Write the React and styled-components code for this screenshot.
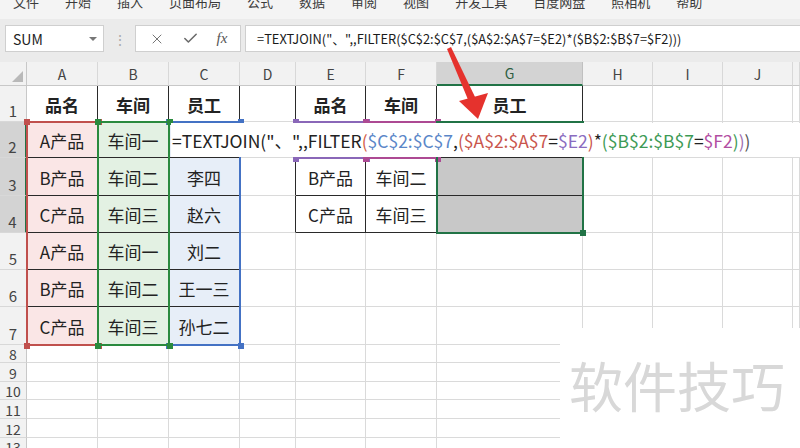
import React from "react";
import styled, { createGlobalStyle } from "styled-components";
import { X, Check } from "lucide-react";

const FONT = `"Noto Sans CJK SC", "Noto Sans", sans-serif`;

const Global = createGlobalStyle`
  html, body { margin: 0; padding: 0; background: #fff; }
  body { font-family: ${FONT}; }
  * { box-sizing: border-box; }
`;

const COLS = [27, 71, 71, 71, 56, 70, 71, 146, 70, 70, 70, 7];
const LETTERS = ["", "A", "B", "C", "D", "E", "F", "G", "H", "I", "J", ""];
const ROWS = [24, 36, 36, 38, 37, 37, 37, 38, 18, 19, 18, 19, 19, 18];
const LEFTS = COLS.reduce((a, w, i) => (a.push(i ? a[i - 1] + COLS[i - 1] : 0), a), []);
const TOPS = ROWS.reduce((a, h, i) => (a.push(i ? a[i - 1] + ROWS[i - 1] : 0), a), []);

const DATA = {
  1: ["品名", "车间", "员工", "", "品名", "车间", "员工"],
  2: ["A产品", "车间一", "", "", "", "", ""],
  3: ["B产品", "车间二", "李四", "", "B产品", "车间二", ""],
  4: ["C产品", "车间三", "赵六", "", "C产品", "车间三", ""],
  5: ["A产品", "车间一", "刘二"],
  6: ["B产品", "车间二", "王一三"],
  7: ["C产品", "车间三", "孙七二"],
};

const isBoxed = (r, c) =>
  (r >= 1 && r <= 7 && c >= 1 && c <= 3) || (r >= 1 && r <= 4 && c >= 5 && c <= 7);

const fillOf = (r, c) => {
  if (r >= 2 && r <= 7) {
    if (c === 1) return "#fae6e6";
    if (c === 2) return "#e3f1e3";
    if (c === 3) return "#e7eef8";
  }
  if ((r === 3 || r === 4) && c === 7) return "#c8c8c8";
  return "#fff";
};

const Page = styled.div`
  position: relative;
  width: 800px;
  height: 448px;
  overflow: hidden;
  background: #fff;
  font-family: ${FONT};
`;

const MenuBar = styled.div`
  display: flex;
  gap: 26px;
  height: 19px;
  padding-left: 13px;
  background: #f4f4f4;
  overflow: hidden;
`;

const MenuItem = styled.span`
  font-size: 13px;
  line-height: 13px;
  color: #3a3a3a;
  margin-top: -5px;
  white-space: nowrap;
`;

const FormulaBand = styled.div`
  display: flex;
  align-items: center;
  height: 43px;
  padding: 0 0 4px 5px;
  background: #ebebeb;
`;

const NameBox = styled.div`
  display: flex;
  align-items: center;
  justify-content: space-between;
  width: 99px;
  height: 27px;
  padding: 0 6px 0 7px;
  background: #fff;
  border: 1px solid #cfcfcf;
  font-size: 14px;
  color: #222;
`;

const Caret = styled.span`
  width: 0;
  height: 0;
  border-left: 4px solid transparent;
  border-right: 4px solid transparent;
  border-top: 4px solid #777;
`;

const Dots = styled.span`
  width: 31px;
  text-align: center;
  color: #aaa;
  font-size: 14px;
  line-height: 14px;
`;

const FxBox = styled.div`
  display: flex;
  align-items: center;
  justify-content: space-around;
  width: 106px;
  height: 27px;
  padding: 0 4px;
  background: #fff;
  border: 1px solid #cfcfcf;
  color: #6a6a6a;
`;

const Fx = styled.span`
  font-family: "Liberation Serif", serif;
  font-style: italic;
  font-size: 15px;
  color: #555;
`;

const FormulaInput = styled.div`
  flex: 1;
  display: flex;
  align-items: center;
  height: 27px;
  margin-left: 4px;
  padding-left: 11px;
  background: #fff;
  border: 1px solid #cfcfcf;
  border-right: none;
  font-size: 12.85px;
  color: #1a1a1a;
  white-space: nowrap;
`;

const Sheet = styled.div`
  position: relative;
  height: 386px;
  overflow: hidden;
`;

const Grid = styled.div`
  display: grid;
  grid-template-columns: ${COLS.map((w) => w + "px").join(" ")};
  grid-template-rows: ${ROWS.map((h) => h + "px").join(" ")};
`;

const Corner = styled.div`
  position: relative;
  background: #f2f2f2;
  border-right: 1px solid #c8c8c8;
  border-bottom: 1px solid #c8c8c8;
  &::after {
    content: "";
    position: absolute;
    right: 3px;
    bottom: 3px;
    border-left: 11px solid transparent;
    border-bottom: 11px solid #b9b9b9;
  }
`;

const ColHead = styled.div`
  display: flex;
  align-items: center;
  justify-content: center;
  background: ${(p) => (p.$sel ? "#d3d3d3" : "#f2f2f2")};
  border-right: 1px solid ${(p) => (p.$sel ? "#c0c0c0" : "#d8d8d8")};
  border-bottom: ${(p) => (p.$sel ? "2px solid #217346" : "1px solid #c8c8c8")};
  color: ${(p) => (p.$sel ? "#2d5e41" : "#444")};
  font-size: 14px;
`;

const RowHead = styled.div`
  display: flex;
  align-items: flex-end;
  justify-content: center;
  overflow: hidden;
  padding-bottom: ${(p) => (p.$small ? "0" : "1px")};
  background: ${(p) => (p.$sel ? "#d3d3d3" : "#f2f2f2")};
  border-right: ${(p) => (p.$sel ? "2px solid #217346" : "1px solid #c8c8c8")};
  border-bottom: 1px solid #d8d8d8;
  color: #444;
  font-size: ${(p) => (p.$small ? "14px" : "15px")};
  line-height: ${(p) => (p.$small ? "16px" : "19px")};
`;

const Cell = styled.div`
  display: flex;
  align-items: center;
  justify-content: center;
  background: ${(p) => p.$fill};
  border-right: 1px solid ${(p) => (p.$darkR ? "#2a2a2a" : "#dadada")};
  border-bottom: 1px solid ${(p) => (p.$darkB ? "#2a2a2a" : "#dadada")};
  font-size: 17px;
  font-weight: ${(p) => (p.$bold ? 700 : 400)};
  color: #222;
  white-space: nowrap;
  padding-top: 1px;
`;

const RangeBox = styled.div`
  position: absolute;
  border: 2px solid ${(p) => p.$color};
`;

const Handle = styled.span`
  position: absolute;
  width: 6px;
  height: 6px;
  background: ${(p) => p.$color};
`;

const EditBox = styled.div`
  position: absolute;
  display: flex;
  align-items: center;
  background: #fff;
  font-size: 17.5px;
  color: #222;
  white-space: nowrap;
  padding-left: 1px;
  padding-top: 1px;
`;

const Tok = styled.span`
  color: ${(p) => p.$c || "#222"};
`;

const Watermark = styled.div`
  position: absolute;
  display: flex;
  align-items: flex-start;
  padding: 26px 0 0 9px;
  background: #fff;
  font-size: 54px;
  line-height: 62px;
  color: #d8d8d8;
`;

const ArrowSvg = styled.svg`
  position: absolute;
  left: 0;
  top: 0;
  pointer-events: none;
`;

const MENU = ["文件", "开始", "插入", "页面布局", "公式", "数据", "审阅", "视图", "开发工具", "百度网盘", "照相机", "帮助"];

function Range({ c1, c2, r1, r2, color, corners = true }) {
  const x = LEFTS[c1] - 1;
  const y = TOPS[r1] - 1;
  const w = LEFTS[c2] + COLS[c2] - LEFTS[c1] + 1;
  const h = TOPS[r2] + ROWS[r2] - TOPS[r1] + 1;
  const pts = [
    [x, y],
    [x + w, y],
    [x, y + h],
    [x + w, y + h],
  ];
  return (
    <>
      <RangeBox $color={color} style={{ left: x, top: y, width: w + 1, height: h + 1 }} />
      {corners &&
        pts.map(([px, py], i) => (
          <Handle key={i} $color={color} style={{ left: px - 2, top: py - 2 }} />
        ))}
    </>
  );
}

export default function App() {
  const cells = [];
  ROWS.forEach((_, r) => {
    COLS.forEach((__, c) => {
      const key = `${r}-${c}`;
      if (r === 0 && c === 0) cells.push(<Corner key={key} />);
      else if (r === 0) cells.push(<ColHead key={key} $sel={c === 7}>{LETTERS[c]}</ColHead>);
      else if (c === 0)
        cells.push(
          <RowHead key={key} $sel={r >= 2 && r <= 4} $small={r >= 8}>
            {r}
          </RowHead>
        );
      else {
        const text = (DATA[r] && DATA[r][c - 1]) || "";
        cells.push(
          <Cell
            key={key}
            $fill={fillOf(r, c)}
            $bold={r === 1}
            $darkR={isBoxed(r, c) || isBoxed(r, c + 1)}
            $darkB={isBoxed(r, c) || isBoxed(r + 1, c)}
          >
            {text}
          </Cell>
        );
      }
    });
  });

  const RED = "#c0504d";
  const GREEN = "#2a8a3e";
  const BLUE = "#4472c4";
  const PURPLE = "#8a67b8";
  const MAGENTA = "#ad4a93";

  return (
    <Page>
      <Global />
      <MenuBar>
        {MENU.map((m) => (
          <MenuItem key={m}>{m}</MenuItem>
        ))}
      </MenuBar>
      <FormulaBand>
        <NameBox>
          SUM
          <Caret />
        </NameBox>
        <Dots>⋮</Dots>
        <FxBox>
          <X size={16} strokeWidth={1.4} />
          <Check size={17} strokeWidth={2.2} />
          <Fx>fx</Fx>
        </FxBox>
        <FormulaInput>=TEXTJOIN("、",,FILTER($C$2:$C$7,($A$2:$A$7=$E2)*($B$2:$B$7=$F2)))</FormulaInput>
      </FormulaBand>
      <Sheet>
        <Grid>{cells}</Grid>
        <Range c1={3} c2={3} r1={2} r2={7} color={BLUE} />
        <Range c1={1} c2={1} r1={2} r2={7} color={RED} />
        <Range c1={5} c2={5} r1={2} r2={2} color={PURPLE} />
        <Range c1={6} c2={6} r1={2} r2={2} color={MAGENTA} />
        <Range c1={2} c2={2} r1={2} r2={7} color={GREEN} />
        <Range c1={7} c2={7} r1={2} r2={4} color="#217346" corners={false} />
        <Handle $color="#217346" style={{ left: LEFTS[8] - 3, top: TOPS[5] - 3 }} />
        <EditBox style={{ left: LEFTS[3] + 2, top: TOPS[2] + 1, width: 800 - LEFTS[3] - 2, height: ROWS[2] - 2 }}>
          <Tok>=TEXTJOIN("、",,FILTER</Tok>
          <Tok $c="#d4604a">(</Tok>
          <Tok $c="#5a86c8">$C$2:$C$7</Tok>
          <Tok>,</Tok>
          <Tok $c="#c9554c">($A$2:$A$7</Tok>
          <Tok>=</Tok>
          <Tok $c="#8a6cc0">$E2</Tok>
          <Tok $c="#c9554c">)</Tok>
          <Tok>*</Tok>
          <Tok $c="#3d9a55">($B$2:$B$7</Tok>
          <Tok>=</Tok>
          <Tok $c="#b24ea2">$F2</Tok>
          <Tok $c="#3d9a55">)</Tok>
          <Tok $c="#a070b0">)</Tok>
          <Tok $c="#555">)</Tok>
        </EditBox>
        <Watermark style={{ left: 560, top: 266, width: 240, height: 120 }}>软件技巧</Watermark>
      </Sheet>
      <ArrowSvg width="800" height="448" viewBox="0 0 800 448">
        <polygon points="447,49 451,47 476,99 469,102" fill="#e5322d" />
        <polygon points="459,101 488,93 478,119" fill="#e5322d" />
      </ArrowSvg>
    </Page>
  );
}
